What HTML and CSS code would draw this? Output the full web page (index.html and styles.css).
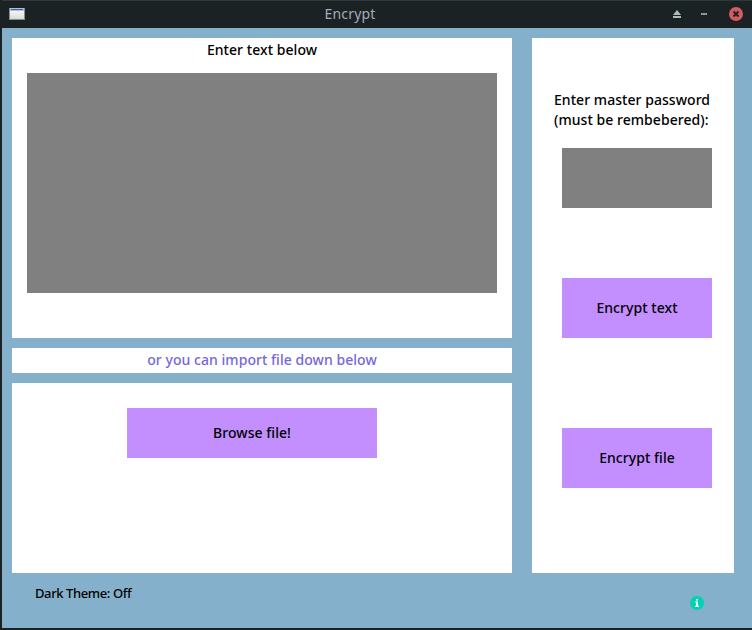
FILE: index.html
```html
<!DOCTYPE html>
<html lang="en">
<head>
<meta charset="utf-8">
<title>Encrypt</title>
<link rel="stylesheet" href="styles.css">
</head>
<body>
<div class="window">
  <header class="titlebar">
    <svg class="app-icon" width="16" height="14" viewBox="0 0 16 14"><defs><linearGradient id="paper" x2="0" y2="1"><stop stop-color="#fff"/><stop offset="1" stop-color="#d9dcd5"/></linearGradient></defs><path fill="#858e88" d="M0 1h16v12H0z"/><path fill="url(#paper)" d="M1 1h14v11H1z"/><path fill="#a9bfe8" d="M1 1h14v3H1z"/><path fill="#4b6291" d="M2 2h12v1H2z"/></svg>
    <h1 class="title">Encrypt</h1>
    <div class="controls">
      <svg width="8" height="8" viewBox="0 0 8 8" fill="#a9bdb9"><path d="M4 0 8 5H0zM0 6h8v2H0z"/></svg>
      <svg width="6" height="2" viewBox="0 0 6 2" fill="#8b9694"><path d="M0 0h6v2H0z"/></svg>
      <svg class="close" width="14" height="14" viewBox="0 0 14 14"><circle cx="7" cy="7" r="7" fill="#d45a62"/><path d="m4.5 4.5 5 5m0-5-5 5" stroke="#1b2224" stroke-width="1.8"/></svg>
    </div>
  </header>
  <main class="content">
    <div class="left">
      <section class="panel text-panel">
        <label class="label">Enter text below</label>
        <div class="text-input"></div>
      </section>
      <p class="panel hint">or you can import file down below</p>
      <section class="panel file-panel"><button class="button browse">Browse file!</button></section>
    </div>
    <aside class="panel side">
      <label class="password-label">Enter master password<br>(must be rembebered):</label>
      <div class="password-input"></div>
      <button class="button">Encrypt text</button>
      <button class="button encrypt-file">Encrypt file</button>
    </aside>
  </main>
  <footer class="footer">
    <span class="theme">Dark Theme: Off</span>
    <svg class="info" width="14" height="14" viewBox="0 0 14 14"><circle cx="7" cy="7" r="7" fill="#00d2b4"/><path d="M6 3h2v1.4H6zM5.2 5.4H8v4.4h1V11H5V9.800h1V6.500h-.8z" fill="#fff"/></svg>
  </footer>
</div>
</body>
</html>
```
FILE: styles.css
```css
* { box-sizing: border-box; }
body { margin: 0; font: 500 14px/20px "Noto Sans", sans-serif; letter-spacing: 0.05px; color: #000; }
.window { width: 752px; height: 630px; background: #85b0cc; border: solid #1b2224; border-width: 0 0 2px 2px; overflow: hidden; }
.titlebar { height: 28px; margin-left: -2px; padding: 0 9px; background: #1b2224; box-shadow: inset 0 1px #303a3c; display: grid; grid-template-columns: 1fr auto 1fr; align-items: center; }
.title { margin: 0; padding-right: 52px; font-size: 14px; font-weight: 400; letter-spacing: 0.15px; color: #a5abb7; }
.controls { display: flex; gap: 20px; align-items: center; justify-content: flex-end; }
.close { margin-left: 2px; }
.content { display: flex; gap: 20px; padding: 10px 0 0 10px; }
.left { width: 500px; display: flex; flex-direction: column; gap: 10px; }
.panel { margin: 0; background: #fff; }
.text-panel { height: 300px; padding: 2px 15px 0; text-align: center; }
.label { display: block; height: 33px; }
.text-input { height: 220px; background: #808080; }
.hint { height: 25px; padding-top: 2px; text-align: center; color: #7468dc; }
.file-panel { height: 190px; padding-top: 25px; text-align: center; }
.button { display: block; width: 150px; height: 60px; margin: 0; padding: 0; border: 0; background: #c38fff; color: inherit; font: inherit; letter-spacing: inherit; }
.browse { width: 250px; height: 50px; margin-left: 115px; }
.side { width: 202px; height: 535px; padding: 52px 22px 0 30px; }
.password-label { display: block; margin-left: -8px; white-space: nowrap; }
.password-input { width: 150px; height: 60px; margin: 18px 0 70px; background: #808080; }
.encrypt-file { margin-top: 90px; }
.footer { display: flex; justify-content: space-between; padding: 10px 48px 0 33px; font-size: 13px; letter-spacing: -0.4px; }
.info { margin-top: 13px; }
```
